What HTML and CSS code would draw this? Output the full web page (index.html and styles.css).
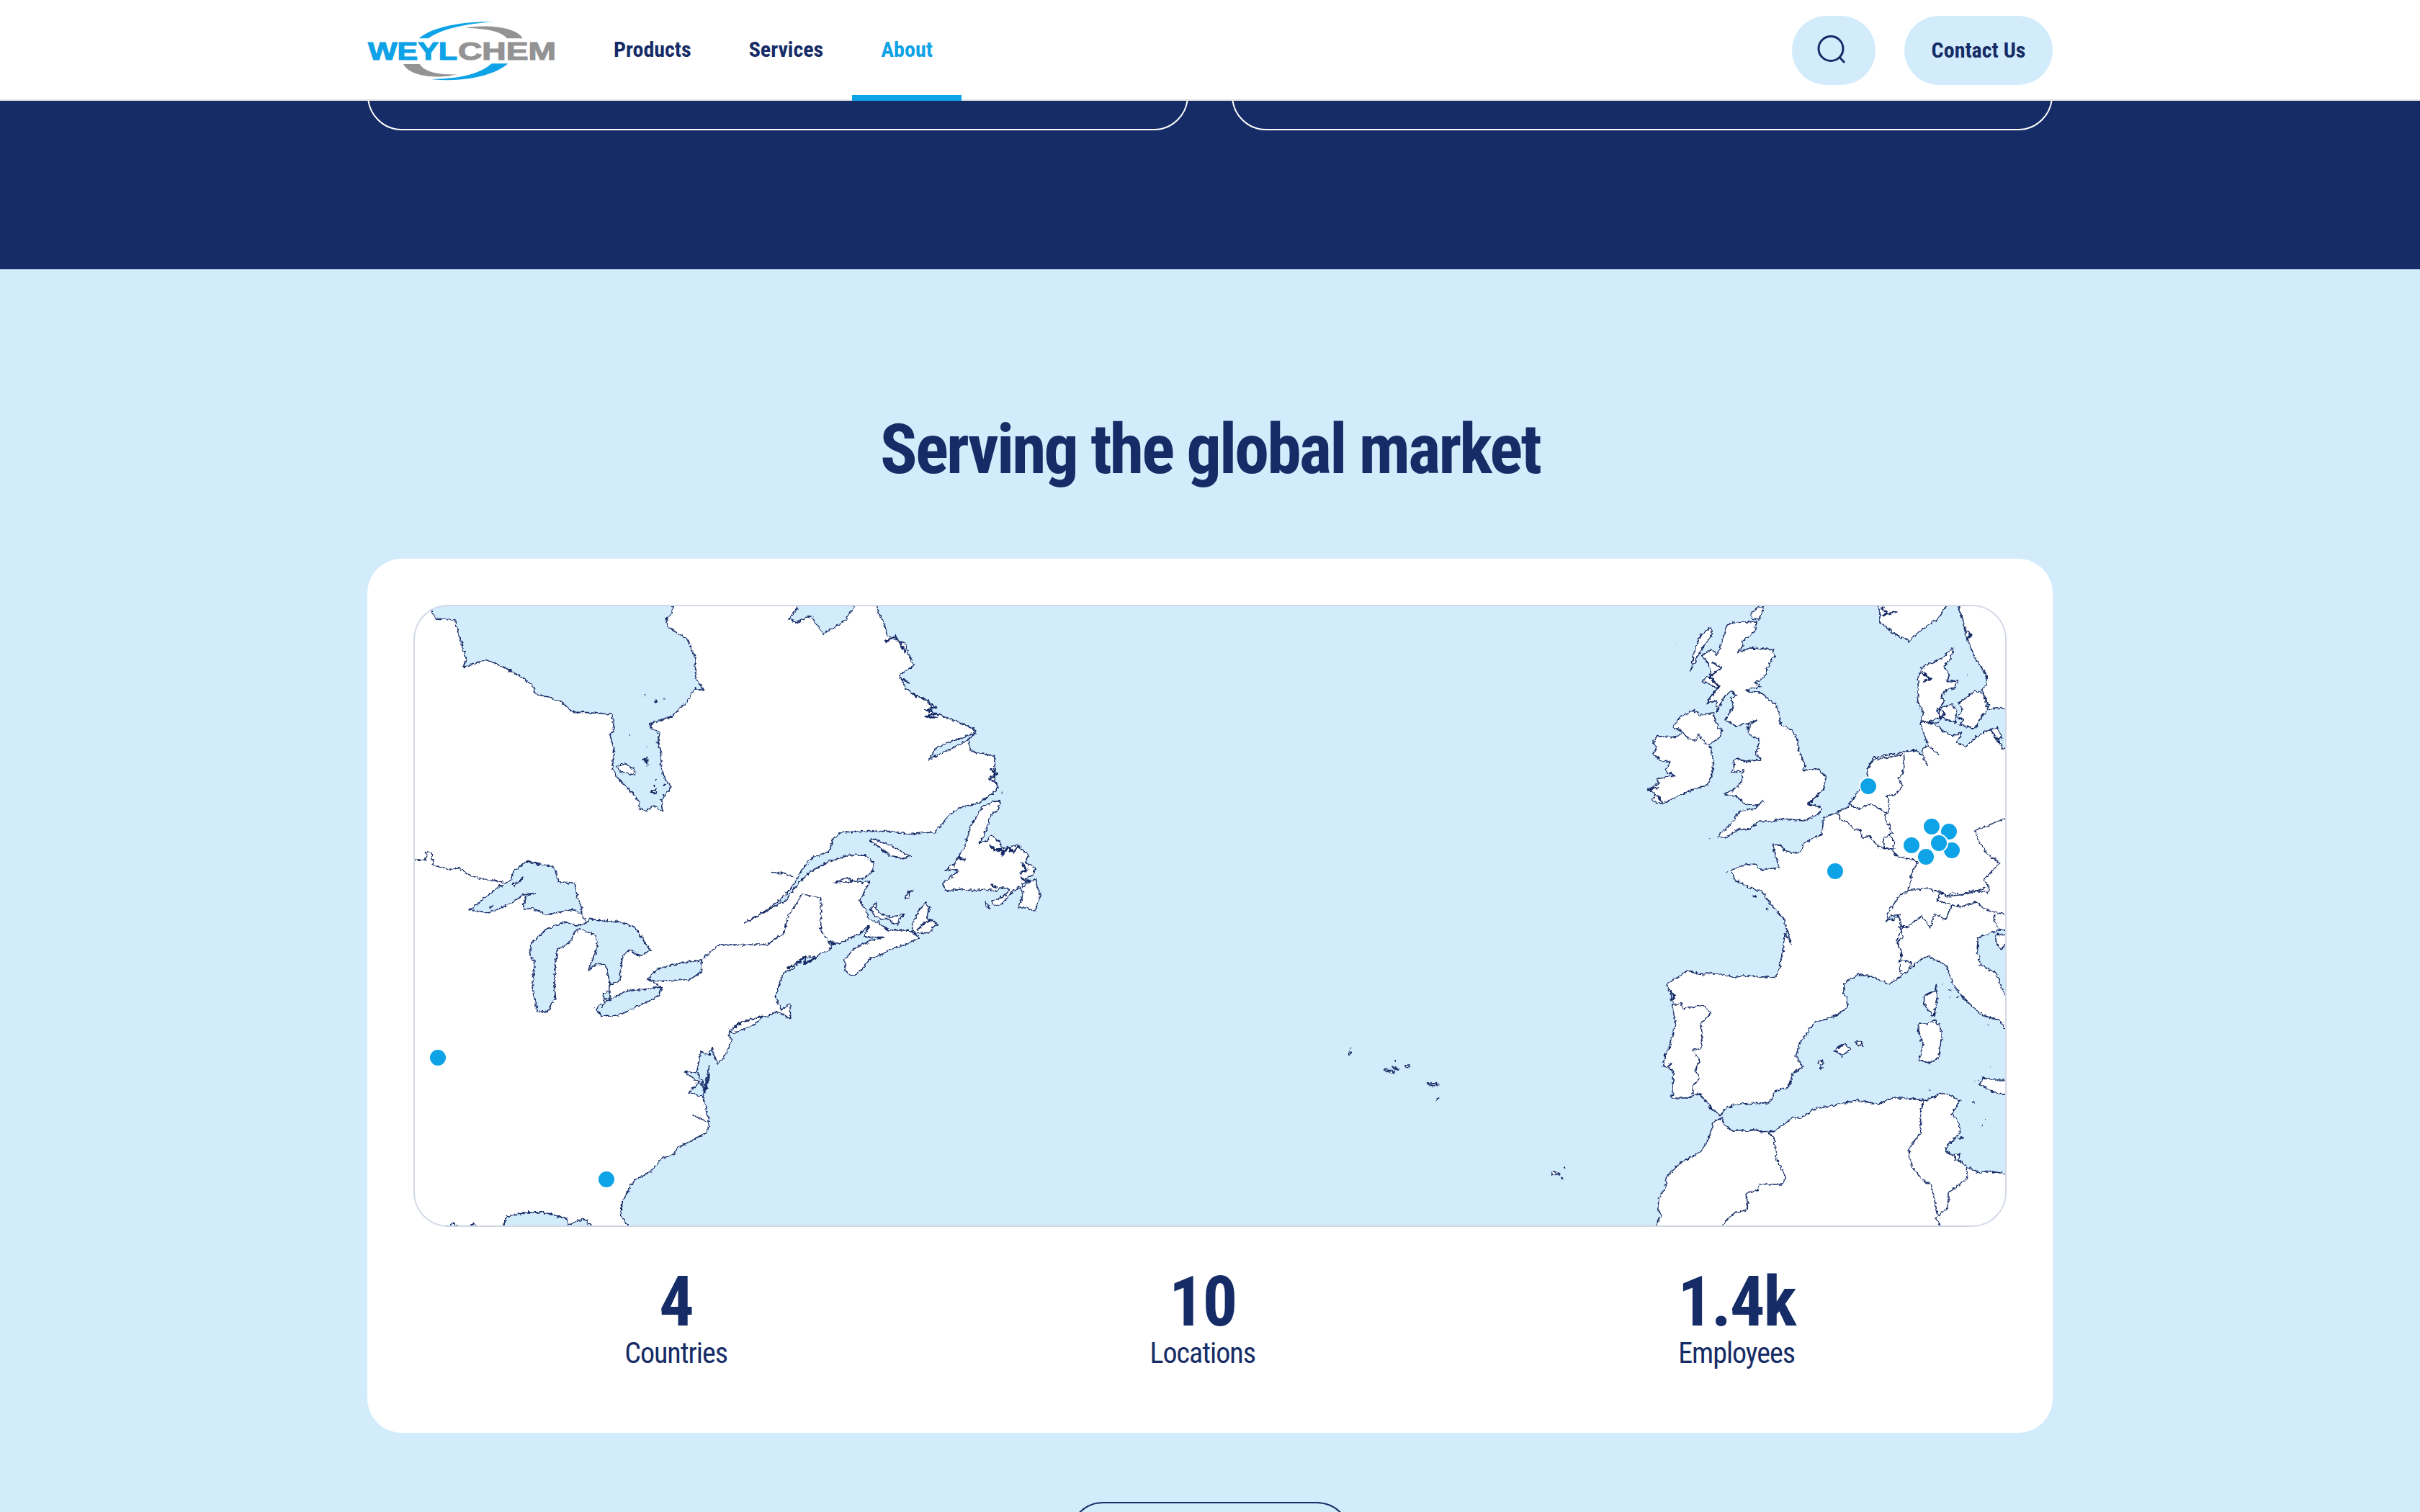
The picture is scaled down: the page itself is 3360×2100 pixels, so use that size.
FILE: index.html
```html
<!DOCTYPE html>
<html lang="en">
<head>
<meta charset="utf-8">
<title>WeylChem – Serving the global market</title>
<link rel="stylesheet" href="styles.css">
</head>
<body>
<header class="site-header">
  <div class="header-inner">
    <a class="logo" href="#" aria-label="WeylChem">
      <svg class="logo-svg" viewBox="500 20 290 100" width="290" height="100">
        <g transform="translate(500 20) scale(.3333)">
          <path class="sw-blue" d="M245 100C290 60 400 28 560 31C470 36 345 55 285 100Z"/>
          <path class="sw-gray" d="M440 56C520 42 650 50 677 100H612C590 70 520 58 440 56Z"/>
          <path class="sw-gray" d="M180 207H248C270 240 320 252 402 250C340 268 210 265 180 207Z"/>
          <path class="sw-blue" d="M616 205C560 255 430 285 295 270C400 268 490 255 548 205Z"/>
        </g>
        <text class="logo-text logo-weyl" x="511" y="83" textLength="124" lengthAdjust="spacingAndGlyphs">WEYL</text>
        <text class="logo-text logo-chem" x="636" y="83" textLength="136" lengthAdjust="spacingAndGlyphs">CHEM</text>
      </svg>
    </a>
    <nav class="main-nav">
      <a class="nav-link" href="#">Products</a>
      <a class="nav-link" href="#">Services</a>
      <a class="nav-link is-active" href="#">About</a>
    </nav>
    <div class="header-actions">
      <button class="pill pill-search" aria-label="Search">
        <svg class="search-icon" width="40" height="44" viewBox="0 0 40 44"><circle cx="19" cy="19.500" r="17" class="search-stroke"/><path d="M31 31.500l7 7.500" class="search-stroke"/></svg>
      </button>
      <a class="pill pill-contact" href="#">Contact Us</a>
    </div>
  </div>
</header>

<section class="navy-band">
  <div class="cards-row">
    <div class="outline-card"></div>
    <div class="outline-card"></div>
  </div>
</section>

<section class="market">
  <h2 class="market-title">Serving the global market</h2>
  <div class="market-card">
    <div class="map-frame">
      <svg class="map" viewBox="574 840 2212 864" width="2212" height="864">
        <defs>
          <filter id="jag" filterUnits="userSpaceOnUse" x="574" y="840" width="2212" height="864">
            <feTurbulence type="fractalNoise" baseFrequency="0.22" numOctaves="2" seed="7" result="n"/>
            <feDisplacementMap in="SourceGraphic" in2="n" scale="6" xChannelSelector="R" yChannelSelector="G"/>
          </filter>
        </defs>
        <g class="coast" filter="url(#jag)">
          <!-- North America -->
          <g transform="translate(560 820) scale(.574)">
            <path class="land" d="M-60 0L60 0L68 50L78 68L125 72L135 110L152 165L145 187L170 178L200 168L230 180L262 195L280 207L312 228L320 250L350 258L385 272L410 295L440 295L505 300L510 335L500 350L510 385L505 430L522 458L545 480L570 510L572 527L590 533L605 520L628 535L625 505L648 475L635 460L625 435L622 380L615 370L620 345L600 335L597 322L620 315L650 305L685 270L705 238L728 242L715 225L708 212L705 160L688 120L640 88L635 70L650 55L655 0L950 0L955 40L932 70L950 78L985 62L1005 90L1018 105L1050 85L1070 70L1090 40L1095 0L1140 0L1148 50L1165 85L1170 110L1215 130L1220 150L1235 180L1215 195L1200 205L1215 235L1240 255L1270 265L1280 295L1320 310L1360 325L1385 340L1365 355L1375 390L1395 395L1430 400L1430 450L1438 480L1420 495L1390 515L1345 525L1320 545L1285 585L1225 590L1180 583L1120 583L1060 585L1040 600L1030 632L990 645L965 675L945 712L915 745L885 770L825 805L880 775L925 750L950 715L985 680L1030 655L1080 640L1120 642L1138 660L1135 680L1115 695L1085 705L1042 707L1071 696L1095 706L1127 706L1112 737L1103 752L1118 772L1126 796L1150 804L1173 822L1214 822L1231 825L1248 842L1214 857L1173 871L1155 883L1132 888L1109 917L1086 935L1070 920L1067 894L1092 865L1129 848L1164 839L1115 839L1126 810L1109 827L1057 854L1028 851L1037 865L999 886L970 888L941 917L920 925L905 965L900 985L915 1015L935 1000L937 1038L905 1020L880 1030L830 1040L790 1060L788 1075L795 1090L775 1130L760 1145L745 1105L740 1125L720 1115L710 1165L680 1165L715 1190L690 1215L725 1225L740 1290L735 1310L700 1330L660 1350L655 1365L625 1375L600 1405L555 1430L530 1480L525 1510L545 1540L545 1600L-60 1600Z"/>
            <path class="lake" d="M157 775L195 745L230 718L262 700L265 680L300 655L345 665L365 670L375 705L415 708L420 740L430 762L432 785L410 772L345 785L315 770L290 770L295 740L318 733L290 735L265 755L220 775L205 780L165 773Z"/>
            <path class="lake" d="M305 880L310 855L345 820L390 802L418 812L445 803L450 795L530 803L560 815L580 845L597 870L570 885L548 870L530 885L523 945L500 955L490 905L465 905L448 920L470 860L465 835L425 818L412 830L405 850L372 870L365 940L368 985L350 1018L325 1020L312 965L318 900Z"/>
            <path class="lake" d="M465 1012L490 995L540 970L625 960L620 980L570 1005L515 1030L480 1030Z"/>
            <path class="lake" d="M590 940L615 915L680 900L722 895L720 925L690 942L610 945Z"/>
            <path class="lake" d="M485 975L500 970L500 988L485 988Z"/>
            <path class="lake" d="M1270 410L1290 380L1340 360L1385 345L1360 365L1310 390Z"/>
            <path class="lake" d="M240 1545L250 1515L300 1505L340 1505L395 1520L400 1535L435 1520L465 1545Z"/>
            <path class="lake" d="M100 1545L120 1530L140 1545ZM160 1545L170 1530L182 1545Z"/>
            <path class="land" d="M515 428L535 418L560 435L560 447L530 440Z"/>
            <path class="land" d="M790 1068L820 1045L870 1030L850 1050L800 1072Z"/>
            <path class="land" d="M262 712L290 695L270 715ZM598 488L612 482L612 492ZM580 410L590 405L590 418Z"/>
            <path class="line" d="M25 652L55 652L55 632L68 635L72 665L110 675L135 672L160 690L200 700L240 705"/>
            <path class="line" d="M725 890L765 857L880 857L920 830L930 790L965 735L1010 745L1010 825L1030 850L1040 855"/>
            <path class="line" d="M890 682L925 685L945 695M432 785L445 805M625 960L590 940M498 955L498 975M487 988L480 1012"/>
            <path class="line" d="M740 1150L725 1225M710 1165L730 1200M700 1270L735 1285"/>
            <path class="dense" d="M1268 270L1288 282L1265 290L1290 298L1262 306L1292 308M1165 125L1190 110L1200 125L1215 150M1200 210L1225 225M1230 250L1270 268M1420 430L1435 445L1418 455L1436 470"/>
            <path class="dense" d="M720 1190L730 1215L740 1170M930 915L975 885M300 655L330 662"/>
            <path class="dot" d="M583 253h3M607 268h4v-4M628 262h3M547 350h2M590 378h2M584 410h4v4h-4zM590 422h3M610 460h3M605 472h4M630 470h4M1447 490h2M210 770l6-10"/>
          </g>
          <!-- Newfoundland and the Gulf of St Lawrence -->
          <g transform="translate(1100 1100) scale(.3333)">
            <path class="land" d="M628 380L660 355L692 328L670 320L635 330L660 305L675 305L690 270L715 235L745 140L790 65L835 40L865 38L860 70L825 100L805 165L780 215L815 200L825 178L860 205L880 235L945 220L955 240L985 262L970 295L1010 315L1005 345L970 360L985 370L955 385L960 400L985 375L1015 362L1020 395L1035 430L1010 497L975 480L945 480L962 420L945 392L905 430L870 470L835 472L835 455L880 435L905 405L870 398L850 412L800 405L755 412L690 405L640 412Z"/>
            <path class="land" d="M320 200L345 197L400 220L450 245L490 268L460 277L410 265L375 240L350 220Z"/>
            <path class="land" d="M470 442L480 420L500 408L485 425L485 442Z"/>
            <path class="land" d="M325 490L350 462L350 490L370 510L410 520L470 510L445 530L440 553L415 545L405 530L365 530L345 515Z"/>
            <path class="land" d="M500 550L530 490L555 460L572 480L560 525L605 548L570 585L530 590L515 590L500 570Z"/>
            <path class="land" d="M805 455L815 470L822 485L808 480Z"/>
            <path class="dense" d="M825 222L850 245L870 235L875 262L900 230L920 255L945 222M835 240L890 245M955 290L975 325L950 340M950 355L975 375M690 270L720 285M520 575L550 545L585 530M60 685L50 715L100 690L70 710M160 640L180 630M850 400L830 385"/>
          </g>
          <!-- Europe, north part -->
          <g transform="translate(2280 840) scale(.3333)">
            <path class="land" d="M25 768L70 745L62 725L135 712L95 690L120 655L80 650L45 620L60 595L45 575L60 548L100 550L135 552L170 530L130 510L160 465L215 440L240 460L295 450L315 510L330 520L325 550L300 570L280 580L295 640L295 690L275 750L200 775L140 800L85 830L40 815L55 790Z"/>
            <path class="line" d="M170 535L195 560L220 565L235 540L260 575L280 580"/>
            <path class="land" d="M355 85L375 75L475 70L470 110L415 155L420 170L395 200L450 180L545 185L550 215L525 250L510 300L470 325L495 340L430 358L490 365L530 395L560 420L580 500L625 525L650 570L650 600L680 670L665 690L735 685L765 720L755 770L690 830L745 845L740 870L670 900L585 890L540 905L490 900L445 935L405 935L345 972L315 965L350 935L380 900L405 860L470 850L505 815L475 838L425 828L395 800L340 790L380 770L415 740L420 690L372 700L385 665L380 650L400 640L430 655L495 645L475 620L490 560L445 540L440 510L475 480L440 495L390 505L345 480L380 425L370 385L395 380L370 360L340 385L312 445L310 400L270 410L290 375L315 350L280 330L250 320L270 300L285 305L280 250L250 210L290 185L310 210L335 150Z"/>
            <path class="land" d="M200 280L215 205L240 130L285 92L290 125L250 180L225 230Z"/>
            <path class="land" d="M450 40L480 10L505 10L490 60L465 60Z"/>
            <path class="land" d="M970 -30L990 30L990 70L1050 120L1110 150L1170 100L1240 50L1285 -30Z"/>
            <path class="land" d="M1305 -30L1335 60L1350 130L1385 220L1435 295L1435 330L1415 355L1445 420L1430 435L1500 430L1600 430L1600 -30Z"/>
            <path class="land" d="M1600 610L1500 600L1490 570L1460 515L1405 540L1350 590L1310 575L1335 530L1300 545L1260 530L1215 495L1180 490L1240 470L1230 440L1260 400L1245 380L1275 350L1300 350L1315 315L1270 320L1280 290L1255 260L1290 215L1295 178L1245 225L1165 260L1150 300L1148 405L1170 445L1160 490L1180 560L1195 590L1170 595L1168 630L1145 605L1080 615L1000 630L960 640L940 680L935 725L905 770L870 820L860 840L815 865L755 885L750 955L670 995L662 1030L640 1035L590 1025L580 1000L545 1000L570 1095L490 1105L470 1080L420 1085L372 1105L385 1145L440 1175L500 1195L530 1240L590 1310L600 1345L622 1415L595 1370L585 1440L570 1525L555 1552L480 1550L440 1545L380 1552L310 1535L240 1540L190 1522L160 1545L102 1580L130 1650L125 1670L140 1740L115 1840L95 1880L88 1925L130 1940L128 2040L120 2055L180 2055L240 2038L275 2080L325 2130L345 2100L390 2080L530 2075L555 2025L610 2010L630 1950L670 1925L640 1880L660 1820L700 1765L720 1740L790 1720L855 1680L855 1635L840 1630L840 1580L900 1540L960 1550L1030 1580L1060 1560L1115 1520L1165 1475L1190 1465L1270 1505L1295 1585L1340 1640L1415 1710L1490 1730L1510 1765L1600 1790Z"/>
            <path class="land" d="M1320 410L1385 360L1420 370L1440 440L1410 470L1390 515L1320 500L1340 480L1315 470L1335 440Z"/>
            <path class="land" d="M1240 430L1290 415L1310 440L1305 490L1260 475L1235 460Z"/>
            <path class="land" d="M1450 520L1480 510L1500 560L1470 550Z"/>
            <path class="line" d="M815 868L830 900L850 900L880 935L910 940L915 970L950 965L975 1000L1005 1015L1040 1020"/>
            <path class="line" d="M865 830L900 850L955 830L1005 860L1025 870"/>
            <path class="line" d="M1090 625L1092 650L1085 700L1065 725L1085 750L1060 790L1020 795L1032 850L1010 880L1030 925L1040 950L1005 975L1010 1015L1040 1020"/>
            <path class="line" d="M1030 950L1050 990L1045 1020"/>
            <path class="line" d="M1040 1020L1065 1050L1120 1060L1150 1075L1125 1110L1110 1190L1190 1180L1245 1200L1275 1215L1290 1195L1330 1210L1380 1190L1440 1200L1445 1180L1425 1145L1465 1100L1490 1075L1440 1040L1405 990L1385 940L1440 920L1500 895L1600 880"/>
            <path class="line" d="M1110 1190L1075 1210L1025 1280L1020 1320L1065 1295L1085 1345L1060 1400L1085 1450L1070 1490L1080 1540"/>
            <path class="line" d="M1168 630L1190 672M1195 590L1240 625M945 680L960 650L1000 640L1085 625M1160 490L1240 490"/>
            <path class="dense" d="M995 10L1025 35L1000 45L1060 28M1345 100L1370 130L1350 145M1165 280L1200 310L1170 320M1240 480L1260 450L1235 430M290 240L330 260L280 300L320 340L290 380M1450 520L1490 580M690 830L735 790M60 790L85 825M30 770L70 760"/>
            <path class="dot" d="M143 169h2M1355 292h3M280 976h3M352 1113h3M378 857h1M465 1215h10M520 1270h3"/>
          </g>
          <!-- Europe, south part and North Africa -->
          <g transform="translate(2300 1220) scale(.3333)">
            <path class="land" d="M270 1000L240 1010L215 1090L185 1140L100 1185L40 1245L40 1280L10 1330L5 1380L20 1400L0 1445L0 1600L1600 1600L1600 1235L1450 1230L1390 1220L1340 1225L1290 1200L1250 1165L1205 1135L1210 1115L1265 1060L1260 1020L1230 980L1265 925L1215 900L1190 895L1120 925L1030 915L985 915L925 940L830 925L770 940L660 960L600 1000L570 995L490 1055L430 1055L415 1045L380 1050L310 1050L280 1025L275 1000Z"/>
            <path class="land" d="M1350 850L1360 830L1410 840L1460 840L1500 840L1500 915L1400 890L1350 860Z"/>
            <path class="land" d="M1115 490L1160 470L1165 445L1170 500L1155 575L1130 550L1115 520Z"/>
            <path class="land" d="M1095 600L1130 605L1160 590L1190 640L1175 750L1135 770L1095 755L1110 690L1090 640Z"/>
            <path class="land" d="M740 715L785 690L808 710L775 740Z"/>
            <path class="land" d="M828 682L850 680L860 698L840 695Z"/>
            <path class="land" d="M672 770L690 755L695 775L680 778Z"/>
            <path class="land" d="M1240 1150L1262 1150L1260 1175L1245 1175Z"/>
            <path class="lake" d="M1520 220L1425 215L1340 245L1335 300L1350 360L1415 395L1450 485L1520 495Z"/>
            <path class="land" d="M1410 235L1460 235L1460 270L1435 295L1415 265Z"/>
            <path class="line" d="M65 530L100 518L110 540L200 530L225 565L185 605L190 655L185 710L150 715L180 760L160 800L180 830L150 870L150 900"/>
            <path class="line" d="M465 1058L490 1085L500 1170L538 1245L525 1275L425 1275L425 1300L375 1310L380 1380L320 1395L275 1445"/>
            <path class="line" d="M1115 925L1100 960L1100 1060L1050 1130L1060 1190L1100 1250L1145 1280L1172 1405"/>
            <path class="line" d="M1290 1205L1295 1250L1215 1310L1215 1370L1172 1405L1162 1415L1180 1445"/>
            <path class="line" d="M1010 200L1030 240L1000 270L1020 300L1015 340L1060 350L1050 380"/>
            <path class="line" d="M1010 200L1050 200L1105 155L1140 205L1160 150L1205 170L1230 110L1265 120L1335 97L1360 125L1450 150"/>
            <path class="line" d="M1180 55L1170 90L1225 110M1180 55L1215 75L1290 65L1370 40M1410 150L1405 175L1430 215"/>
            <path class="lake" d="M960 175L975 155L1015 152L985 170Z"/>
            <path class="land" d="M685 785L692 790L680 792ZM405 70L415 72L410 80Z"/>
            <path class="dense" d="M55 470L78 490L60 510M45 785L60 770M1255 1085L1280 1080M170 895L190 905M220 950L230 965"/>
            <path class="dot" d="M458 128h3M528 303h6M1218 463h10M1190 440h2M1218 498h2M1252 495h3M1378 614h2M1390 787h2M1325 845h2M1340 845h3M1135 878h2M1318 933h4M1372 1002h2M1352 1028h5"/>
          </g>
          <!-- Azores and Madeira -->
          <g transform="translate(1780 1400) scale(.3333)">
            <path class="land" d="M277 188a5 5 0 1 0 10 0a5 5 0 1 0 -10 0ZM425 257L435 252L440 262L430 263ZM443 260L458 260L472 266L470 272L445 268ZM512 241L532 240L532 251L515 250ZM605 310L615 315L647 314L647 322L622 323L605 318ZM1121 684L1135 682L1155 690L1140 698L1125 694Z"/>
            <path class="dense" d="M286 169h3M470 220h7M457 245L488 259M644 379h11M1172 669L1180 663M1165 704L1168 715"/>
          </g>
        </g>
        <g class="pins">
          <circle class="pin" cx="608" cy="1469" r="12"/>
          <circle class="pin" cx="842" cy="1638" r="12"/>
          <circle class="pin" cx="2594" cy="1092" r="12"/>
          <circle class="pin" cx="2548" cy="1210" r="12"/>
          <circle class="pin" cx="2710" cy="1181" r="12"/>
          <circle class="pin" cx="2706" cy="1155" r="12"/>
          <circle class="pin" cx="2682" cy="1148" r="12"/>
          <circle class="pin" cx="2654" cy="1174" r="12"/>
          <circle class="pin" cx="2692" cy="1171" r="12"/>
          <circle class="pin" cx="2674" cy="1190" r="12"/>
        </g>
      </svg>
    </div>
    <div class="stats">
      <div class="stat"><div class="stat-num">4</div><div class="stat-label">Countries</div></div>
      <div class="stat"><div class="stat-num">10</div><div class="stat-label">Locations</div></div>
      <div class="stat"><div class="stat-num">1.4k</div><div class="stat-label">Employees</div></div>
    </div>
  </div>
  <div class="market-cta"><span class="outline-btn"></span></div>
</section>
</body>
</html>
```
FILE: styles.css
```css
* { box-sizing: border-box; }
html, body { margin: 0; height: 2100px; overflow: hidden; }
body {
  font-family: "Roboto", "Liberation Sans", sans-serif;
  font-stretch: 75%;
  color: #162c66;
  background: #d3ecfc;
}
.site-header { height: 140px; background: #fff; border-bottom: 2px solid #e2e2e2; }
.header-inner { width: 2340px; height: 138px; margin: 0 auto; display: flex; align-items: stretch; }
.logo { width: 302px; height: 140px; display: flex; align-items: center; }
.logo-svg { display: block; margin-left: -10px; }
.sw-blue { fill: #0ea2e6; }
.sw-gray { fill: #939393; }
.logo-text { font-family: "Liberation Sans", sans-serif; font-weight: 700; font-size: 35px; font-stretch: 100%; stroke-width: 1.2px; }
.logo-weyl { fill: #0ea2e6; stroke: #0ea2e6; }
.logo-chem { fill: #939393; stroke: #939393; }
.main-nav { display: flex; height: 140px; position: relative; }
.nav-link {
  display: flex; align-items: center; height: 140px; padding: 4px 40px 0;
  font-size: 30px; font-weight: 700; text-decoration: none; color: #162c66;
  border-bottom: 8px solid transparent;
}
.nav-link.is-active { color: #0ea2e6; border-bottom-color: #0ea2e6; }
.header-actions { margin-left: auto; display: flex; gap: 40px; padding-top: 22px; align-items: flex-start; }
.pill {
  display: flex; align-items: center; justify-content: center;
  height: 96px; border-radius: 48px; border: 0; background: #d3ecfc;
  font-family: inherit; font-stretch: inherit; color: #162c66; text-decoration: none;
}
.pill-search { width: 116px; padding: 0; }
.search-icon { margin-right: 6px; }
.pill-contact { width: 206px; padding-bottom: 2px; font-size: 30px; font-weight: 700; }
.search-stroke { fill: none; stroke: #162c66; stroke-width: 3px; }
.navy-band { height: 234px; background: #162c66; }
.cards-row { width: 2340px; height: 41px; margin: 0 auto; display: flex; gap: 60px; align-items: flex-end; overflow: hidden; }
.outline-card { flex: 1; height: 120px; border: 2px solid #fff; border-radius: 48px; }
.market { height: 1726px; }
.market-title { margin: 0; padding-top: 192px; text-align: center; font-size: 96px; line-height: 116px; font-weight: 700; letter-spacing: -2.88px; }
.market-card { width: 2340px; height: 1214px; margin: 94px auto 0; padding: 64px; background: #fff; border-radius: 48px; }
.map-frame { height: 864px; border-radius: 48px; overflow: hidden; background: #d3ecfc; position: relative; }
.map-frame::after { content: ""; position: absolute; inset: 0; border: 2px solid #d2d7e6; border-radius: 48px; pointer-events: none; }
.map { display: block; }
.land { fill: #fff; stroke: #162c66; stroke-width: 1.6px; vector-effect: non-scaling-stroke; stroke-linejoin: round; }
.lake { fill: #d3ecfc; stroke: #162c66; stroke-width: 1.6px; vector-effect: non-scaling-stroke; stroke-linejoin: round; }
.line { fill: none; stroke: #162c66; stroke-width: 1.5px; vector-effect: non-scaling-stroke; }
.dense { fill: none; stroke: #162c66; stroke-width: 2.6px; vector-effect: non-scaling-stroke; }
.dot { fill: none; stroke: #162c66; stroke-width: 2px; vector-effect: non-scaling-stroke; }
.pin { fill: #0ea2e6; stroke: #fff; stroke-width: 2px; }
.stats { display: flex; justify-content: space-around; padding-top: 56px; }
.stat { text-align: center; }
.stat-num { font-size: 96px; font-weight: 700; line-height: 96px; letter-spacing: -1.9px; }
.stat-label { font-size: 40px; line-height: 48px; font-weight: 400; letter-spacing: -1px; }
.market-cta { display: flex; justify-content: center; padding-top: 96px; }
.outline-btn { display: block; width: 392px; height: 96px; border: 2px solid #162c66; border-radius: 48px; }
```
